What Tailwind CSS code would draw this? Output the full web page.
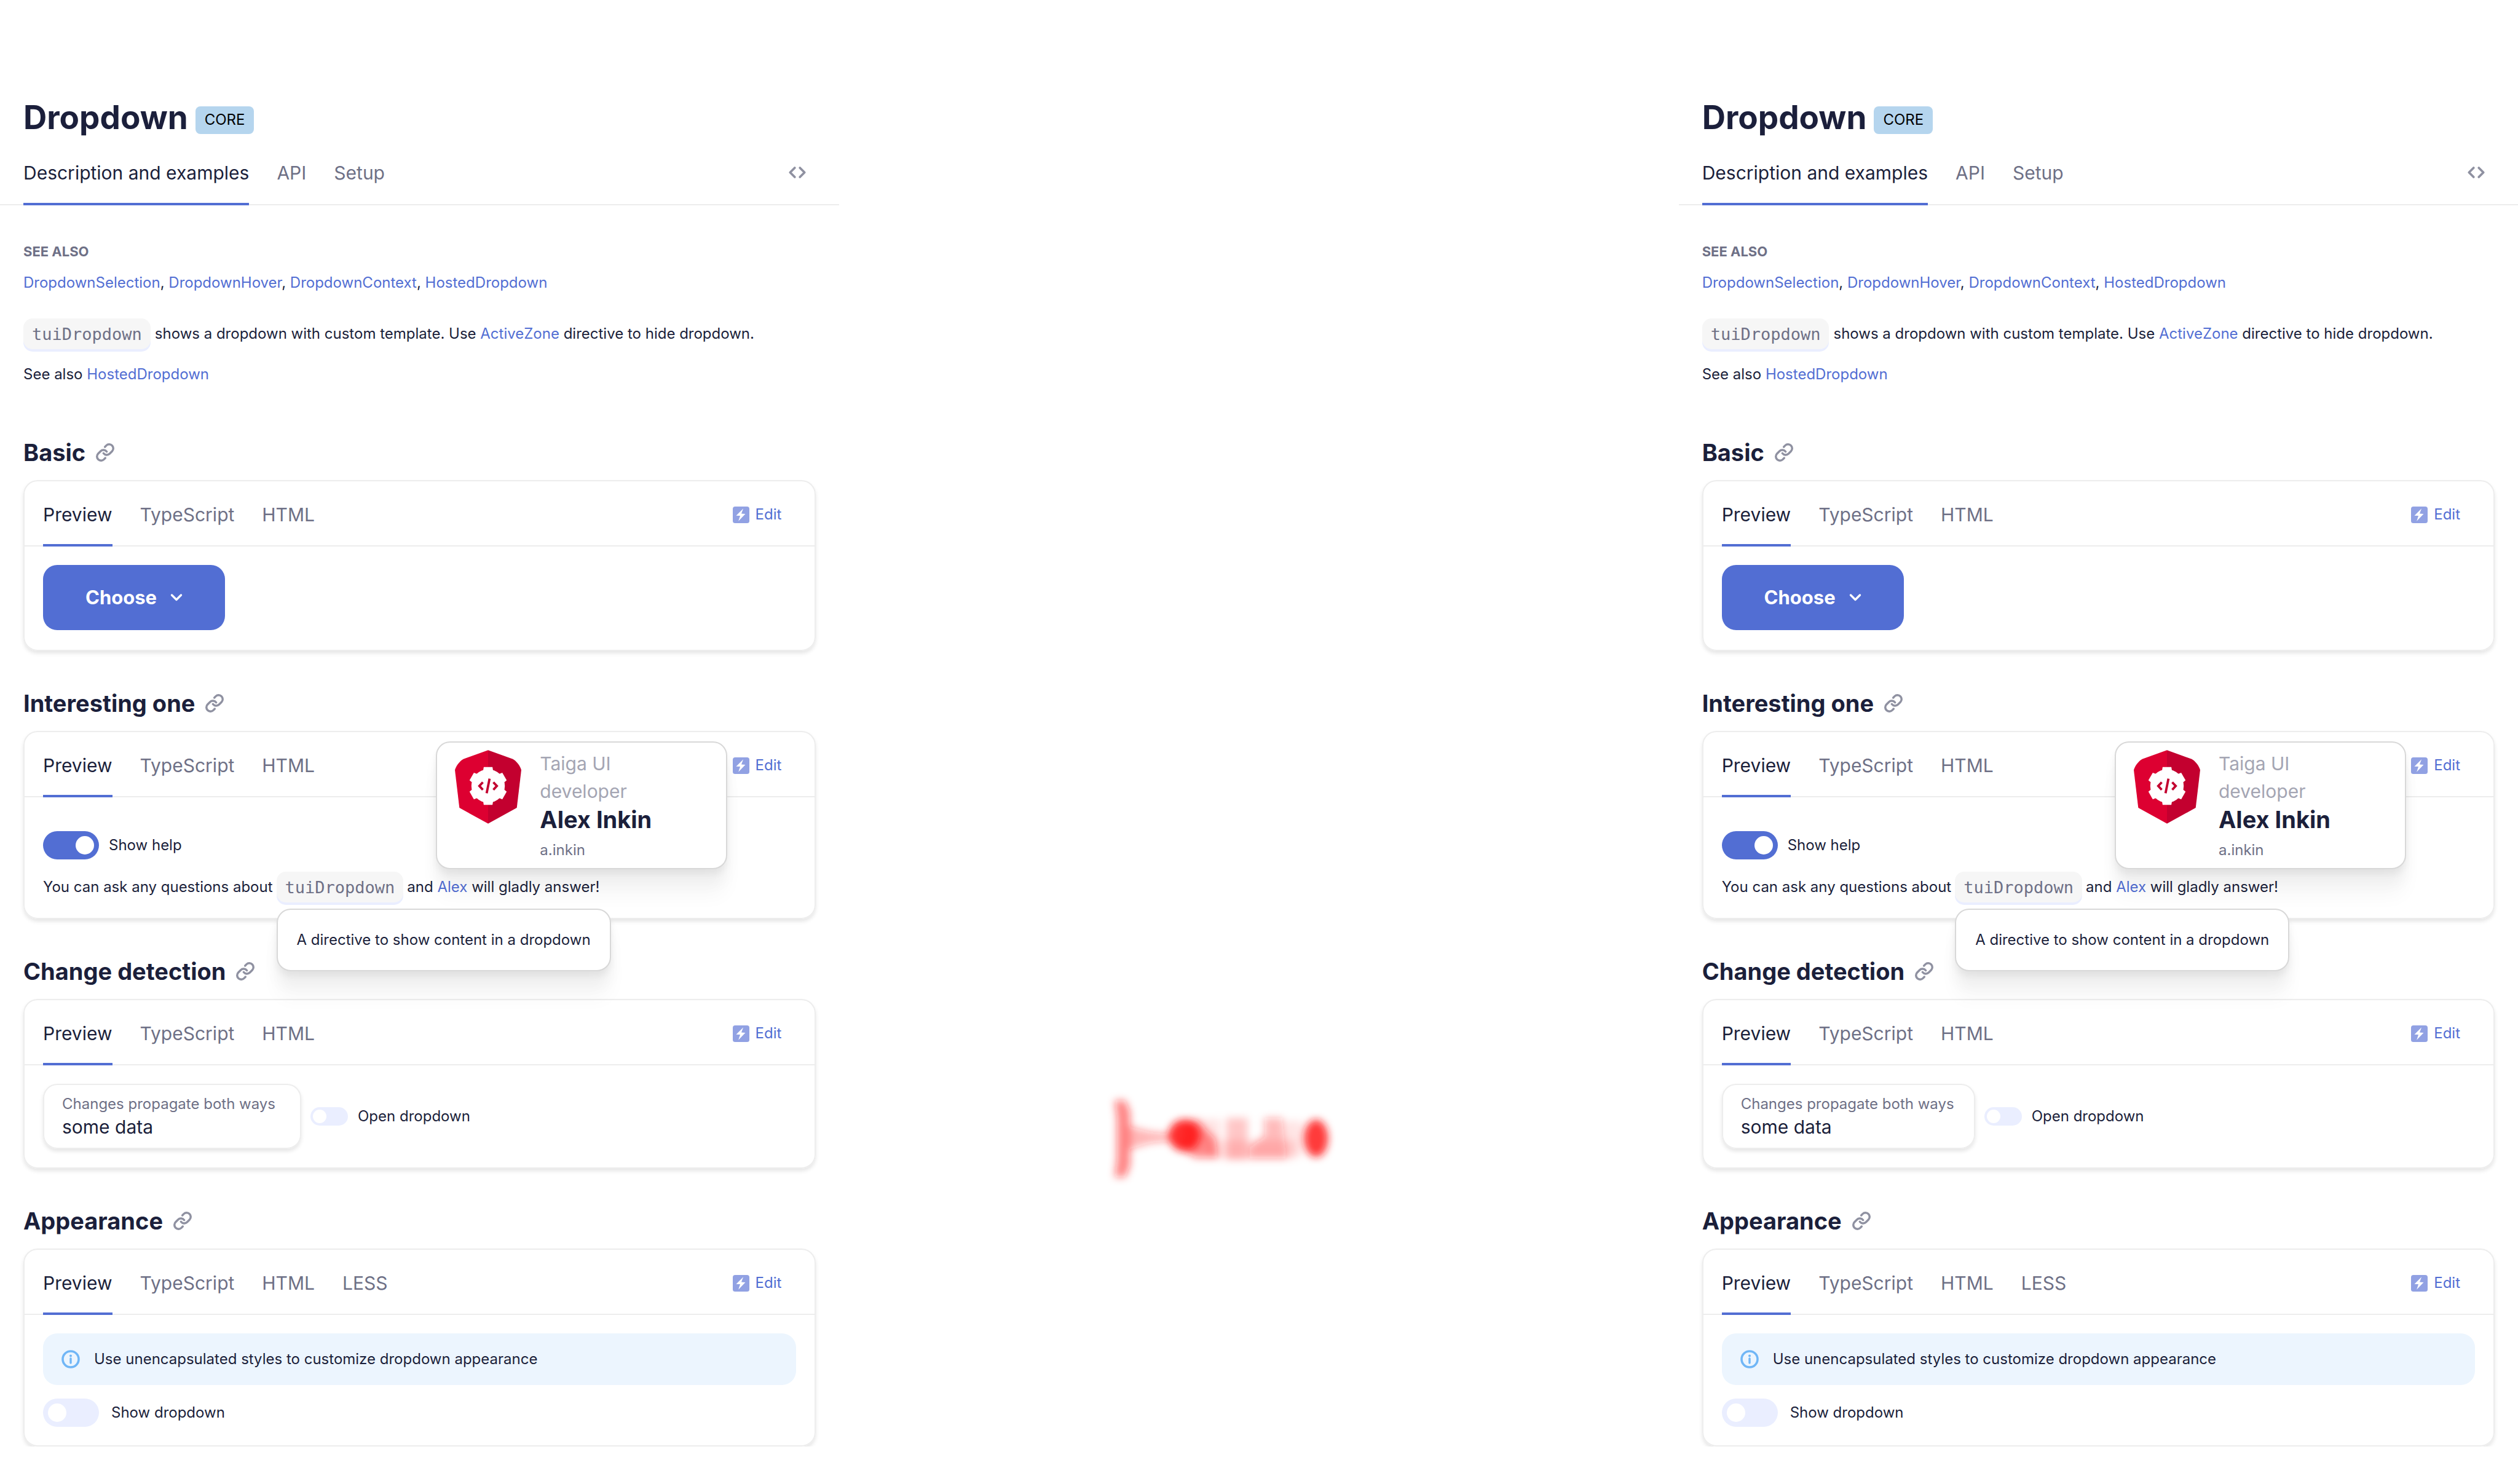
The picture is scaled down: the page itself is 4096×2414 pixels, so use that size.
<!DOCTYPE html>
<html lang="en">
<head>
<meta charset="utf-8">
<title>Dropdown</title>
<script src="https://cdn.jsdelivr.net/npm/@tailwindcss/browser@4"></script>
</head>
<body class="bg-white font-['Inter','Liberation_Sans',sans-serif] text-[24px] text-[#1b1f3b]">
<svg class="hidden" aria-hidden="true">
  <symbol id="i-link" viewBox="0 0 24 24"><path d="M10 13a5 5 0 0 0 7.54.54l3-3a5 5 0 0 0-7.07-7.07l-1.72 1.71M14 11a5 5 0 0 0-7.54-.54l-3 3a5 5 0 0 0 7.07 7.07l1.71-1.71" fill="none" stroke="currentColor" stroke-width="2.600" stroke-linecap="round" stroke-linejoin="round"/></symbol>
  <symbol id="i-bolt" viewBox="0 0 28 28"><rect width="28" height="28" rx="4" fill="#91a1e3"/><path d="M17.7 3.3 5.7 15.3l6.8.3-3 9.1L21.2 12.5l-6.7-.5z" fill="#fff"/></symbol>
</svg>

<main class="grid grid-cols-3">
  <div id="left" class="group/panel">
    <header>
      <h1 class="flex h-[228px] items-center gap-3 px-[38px] pt-[154px] text-[53px] font-bold leading-[72px]">Dropdown
        <span class="mt-2 flex h-[45px] items-center rounded-lg bg-[#b5d5ee] px-[15px] text-[24px] font-normal leading-none text-black">CORE</span>
      </h1>
      <nav class="flex h-[106px] items-center border-b-2 border-[#ededed] pr-[53px] pl-[38px] text-[30px] text-[#6e7086]">
        <button class="-mb-0.5 h-[106px] border-b-4 border-[#526ed3] pt-1 text-[#1b1f3b]">Description and examples</button>
        <button class="ml-[45px] pt-0.5">API</button>
        <button class="ml-[45px] pt-0.5">Setup</button>
        <button class="ml-auto" aria-label="Source code"><svg class="h-[21px] w-[30px] text-[#8f91a1]" viewBox="0 0 32 22"><path d="M11.5 3 3.5 11l8 8M20.500 3l8 8-8 8" fill="none" stroke="currentColor" stroke-width="4" stroke-linecap="round" stroke-linejoin="round"/></svg></button>
      </nav>
    </header>

    <div class="px-[38px] pt-[61px]">
      <h2 class="text-[22px] font-bold leading-[28px] text-[#6e7086]">SEE ALSO</h2>
      <p class="mt-[17px] leading-[40px]"><a href="#" class="text-[#526ed3]">DropdownSelection</a>, <a href="#" class="text-[#526ed3]">DropdownHover</a>, <a href="#" class="text-[#526ed3]">DropdownContext</a>, <a href="#" class="text-[#526ed3]">HostedDropdown</a></p>
      <p class="mt-[38px] flex items-center leading-[50px]"><code class="mr-[7px] flex h-[50px] items-center rounded-[15px] bg-[#f6f6f6] px-[14px] font-['DejaVu_Sans_Mono',monospace] text-[27px] leading-none text-[#6e7086] shadow-[0_4px_0_#eaeeff]">tuiDropdown</code><span>shows a dropdown with custom template. Use <a href="#" class="text-[#526ed3]">ActiveZone</a> directive to hide dropdown.</span></p>
      <p class="mt-4 leading-[50px]">See also <a href="#" class="text-[#526ed3]">HostedDropdown</a></p>

      <section class="mt-[77px]">
        <h2 class="flex h-[50px] items-center gap-4 text-[38px] font-bold">Basic <svg class="size-8 text-[#8f91a1]"><use href="#i-link"/></svg></h2>
        <div class="mt-5 rounded-[23px] border-2 border-[#ededed] shadow-[0_4px_6px_rgba(0,0,0,0.1)]">
          <div class="flex h-[106px] items-center gap-[45px] border-b-2 border-[#ededed] pr-[54px] pl-[30px] text-[30px] text-[#6e7086]">
            <button class="-mb-0.5 h-[106px] border-b-4 border-[#526ed3] pt-1.5 text-[#1b1f3b]">Preview</button>
            <button class="pt-1">TypeScript</button>
            <button class="pt-1">HTML</button>
            <a href="#" class="ml-auto flex items-center gap-[10px] pt-1 text-[24px] text-[#526ed3]"><svg class="size-[27px]"><use href="#i-bolt"/></svg>Edit</a>
          </div>
          <div class="px-[30px] pt-[30px] pb-8">
            <button class="flex h-[106px] w-[296px] items-center justify-center gap-[22px] rounded-[23px] bg-[#526ed3] text-[31px] font-bold text-white">Choose <svg class="h-[14px] w-[20px]" viewBox="0 0 20 14"><path d="M2.500 3l7.500 7.500L17.500 3" fill="none" stroke="currentColor" stroke-width="3.400" stroke-linecap="round" stroke-linejoin="round"/></svg></button>
          </div>
        </div>
      </section>

      <section class="mt-[60px]">
        <h2 class="flex h-[50px] items-center gap-4 text-[38px] font-bold">Interesting one <svg class="size-8 text-[#8f91a1]"><use href="#i-link"/></svg></h2>
        <div class="relative z-10 mt-5 rounded-[23px] border-2 border-[#ededed] shadow-[0_4px_6px_rgba(0,0,0,0.1)]">
          <div class="flex h-[106px] items-center gap-[45px] border-b-2 border-[#ededed] pr-[54px] pl-[30px] text-[30px] text-[#6e7086]">
            <button class="-mb-0.5 h-[106px] border-b-4 border-[#526ed3] pt-1.5 text-[#1b1f3b]">Preview</button>
            <button class="pt-1">TypeScript</button>
            <button class="pt-1">HTML</button>
            <a href="#" class="ml-auto flex items-center gap-[10px] pt-1 text-[24px] text-[#526ed3]"><svg class="size-[27px]"><use href="#i-bolt"/></svg>Edit</a>
          </div>
          <div class="px-[30px] pt-[55px] pb-[25px]">
            <label class="flex h-[46px] w-max items-center gap-4"><input type="checkbox" checked class="flex h-[46px] w-[91px] appearance-none items-center rounded-full bg-[#eaeeff] px-2 before:block before:size-[30px] before:rounded-full before:bg-white checked:justify-end checked:bg-[#526ed3]">Show help</label>
            <div class="mt-5 flex items-center leading-[50px]">
              <span>You can ask any questions about</span>
              <div class="relative mx-[6px]">
                <code class="flex h-[50px] items-center rounded-[15px] bg-[#f6f6f6] px-[14px] font-['DejaVu_Sans_Mono',monospace] text-[27px] leading-none text-[#6e7086] shadow-[0_4px_0_#eaeeff]">tuiDropdown</code>
                <div role="tooltip" class="absolute top-[60px] left-0 flex h-[102px] w-[544px] items-center justify-center rounded-[23px] border-2 border-[#d8d8d8] bg-white leading-none whitespace-nowrap shadow-[0_45px_30px_rgba(0,0,0,0.03),0_23px_23px_rgba(0,0,0,0.04),0_8px_11px_rgba(0,0,0,0.05)]">A directive to show content in a dropdown</div>
              </div>
              <span>and <a href="#" class="text-[#526ed3]">Alex</a> will gladly answer!</span>
            </div>
          </div>
          <div class="absolute top-[15px] right-[142px] flex h-[208px] w-[474px] gap-[30px] rounded-[23px] border-2 border-[#d8d8d8] bg-white py-[12px] pl-[29px] shadow-[0_45px_30px_rgba(0,0,0,0.03),0_23px_23px_rgba(0,0,0,0.04),0_8px_11px_rgba(0,0,0,0.05)]">
            <svg class="h-[120px] w-[108px] shrink-0" viewBox="0 0 114 126">
              <path d="M57 0 14.500 15.300C8 19 2 27 0 34l7.700 65L57 126z" fill="#dd0031"/>
              <path d="M57 0l42.500 15.300C106 19 112 27 114 34l-7.700 65L57 126z" fill="#c3002f"/>
              <g transform="translate(57 61.500)">
                <g fill="#fff">
                  <circle r="28.700"/>
                  <path d="M-7.500-32.500h15l1.500 9h-18z"/>
                  <path d="M-7.500-32.500h15l1.500 9h-18z" transform="rotate(60)"/>
                  <path d="M-7.500-32.500h15l1.500 9h-18z" transform="rotate(120)"/>
                  <path d="M-7.500-32.500h15l1.500 9h-18z" transform="rotate(180)"/>
                  <path d="M-7.500-32.500h15l1.500 9h-18z" transform="rotate(240)"/>
                  <path d="M-7.500-32.500h15l1.500 9h-18z" transform="rotate(300)"/>
                </g>
                <path d="M-9-6.500-15 0l6 6.500M9-6.500 15 0 9 6.500M2.500-12.500l-5 25" fill="none" stroke="#c3002f" stroke-width="4"/>
              </g>
            </svg>
            <div class="flex w-[200px] flex-col">
              <span class="text-[30px] leading-[45px] text-[#a4a5b3]">Taiga UI<br>developer</span>
              <strong class="text-[38px] leading-[46px]">Alex Inkin</strong>
              <span class="leading-[54px] text-[#6e7086]">a.inkin</span>
            </div>
          </div>
        </div>
      </section>

      <section class="mt-[60px]">
        <h2 class="flex h-[50px] items-center gap-4 text-[38px] font-bold">Change detection <svg class="size-8 text-[#8f91a1]"><use href="#i-link"/></svg></h2>
        <div class="mt-5 rounded-[23px] border-2 border-[#ededed] shadow-[0_4px_6px_rgba(0,0,0,0.1)]">
          <div class="flex h-[106px] items-center gap-[45px] border-b-2 border-[#ededed] pr-[54px] pl-[30px] text-[30px] text-[#6e7086]">
            <button class="-mb-0.5 h-[106px] border-b-4 border-[#526ed3] pt-1.5 text-[#1b1f3b]">Preview</button>
            <button class="pt-1">TypeScript</button>
            <button class="pt-1">HTML</button>
            <a href="#" class="ml-auto flex items-center gap-[10px] pt-1 text-[24px] text-[#526ed3]"><svg class="size-[27px]"><use href="#i-bolt"/></svg>Edit</a>
          </div>
          <div class="flex items-center gap-[15px] px-[30px] pt-[30px] pb-[30px]">
            <label class="flex h-[106px] w-[420px] flex-col justify-center rounded-[23px] border-2 border-[#ededed] px-[29px] text-[#6e7086] shadow-[0_4px_6px_rgba(0,0,0,0.1)] group-data-compact/panel:w-[412px]">
              <span class="leading-[34px] whitespace-nowrap">Changes propagate both ways</span>
              <input type="text" value="some data" class="w-full text-[30px] leading-[40px] text-[#1b1f3b] outline-none">
            </label>
            <label class="flex items-center gap-4"><input type="checkbox" class="flex h-[30px] w-[61px] appearance-none items-center rounded-full bg-[#eaeeff] px-1 before:block before:size-[22px] before:rounded-full before:bg-white checked:justify-end checked:bg-[#526ed3]">Open dropdown</label>
          </div>
        </div>
      </section>

      <section class="mt-[60px]">
        <h2 class="flex h-[50px] items-center gap-4 text-[38px] font-bold">Appearance <svg class="size-8 text-[#8f91a1]"><use href="#i-link"/></svg></h2>
        <div class="mt-5 rounded-[23px] border-2 border-[#ededed] shadow-[0_4px_6px_rgba(0,0,0,0.1)]">
          <div class="flex h-[106px] items-center gap-[45px] border-b-2 border-[#ededed] pr-[54px] pl-[30px] text-[30px] text-[#6e7086]">
            <button class="-mb-0.5 h-[106px] border-b-4 border-[#526ed3] pt-1.5 text-[#1b1f3b]">Preview</button>
            <button class="pt-1">TypeScript</button>
            <button class="pt-1">HTML</button>
            <button class="pt-1">LESS</button>
            <a href="#" class="ml-auto flex items-center gap-[10px] pt-1 text-[24px] text-[#526ed3]"><svg class="size-[27px]"><use href="#i-bolt"/></svg>Edit</a>
          </div>
          <div class="px-[30px] pt-[30px] pb-[30px]">
            <p class="flex h-[84px] items-center gap-[23px] rounded-[23px] bg-[#ecf5fe] px-[30px]"><svg class="size-[30px]" viewBox="0 0 30 30"><circle cx="15" cy="15" r="13" fill="none" stroke="#70b6f6" stroke-width="3.600"/><path d="M15 14v7" stroke="#70b6f6" stroke-width="3.400" stroke-linecap="round"/><circle cx="15" cy="9.500" r="2" fill="#70b6f6"/></svg>Use unencapsulated styles to customize dropdown appearance</p>
            <label class="mt-[22px] flex h-[46px] w-max items-center gap-5"><input type="checkbox" class="flex h-[46px] w-[91px] appearance-none items-center rounded-full bg-[#eaeeff] px-2 before:block before:size-[30px] before:rounded-full before:bg-white checked:justify-end checked:bg-[#526ed3]">Show dropdown</label>
          </div>
        </div>
      </section>
    </div>
  </div>

  <div id="diff" class="pt-[1744px]">
    <svg class="ml-[29%] h-[209px] w-[455px] overflow-visible" viewBox="0 0 1440 660">
      <defs>
        <filter id="soft" x="-20%" y="-20%" width="140%" height="140%"><feGaussianBlur stdDeviation="21"/></filter>
      </defs>
      <g filter="url(#soft)" fill="#ff1414">
        <path d="M165 145h55l25 60v275l-25 60h-55l12-90V235z" opacity=".52"/>
        <path d="M235 275 350 305l110 10v40l-110 10-115 35z" opacity=".32"/>
        <ellipse cx="525" cy="325" rx="82" ry="82" opacity=".9"/>
        <path d="M530 245h60l95 100 10 95H580L500 390z" opacity=".5"/>
        <path d="M590 240h120v200H650z" opacity=".1"/>
        <path d="M740 235h110v215H740z" opacity=".22"/>
        <path d="M700 350h400v95H700z" opacity=".12"/>
        <path d="M935 235h95l20 210H860v-60l75-60z" opacity=".3"/>
        <path d="M1040 250h90v180h-90z" opacity=".1"/>
        <ellipse cx="1202" cy="340" rx="62" ry="96" opacity=".85"/>
      </g>
    </svg>
  </div>

  <div id="right" class="group/panel" data-compact></div>
</main>
<script>
  const source = document.getElementById('left');
  const target = document.getElementById('right');
  for (const node of source.children) target.append(node.cloneNode(true));
</script>
</body>
</html>
